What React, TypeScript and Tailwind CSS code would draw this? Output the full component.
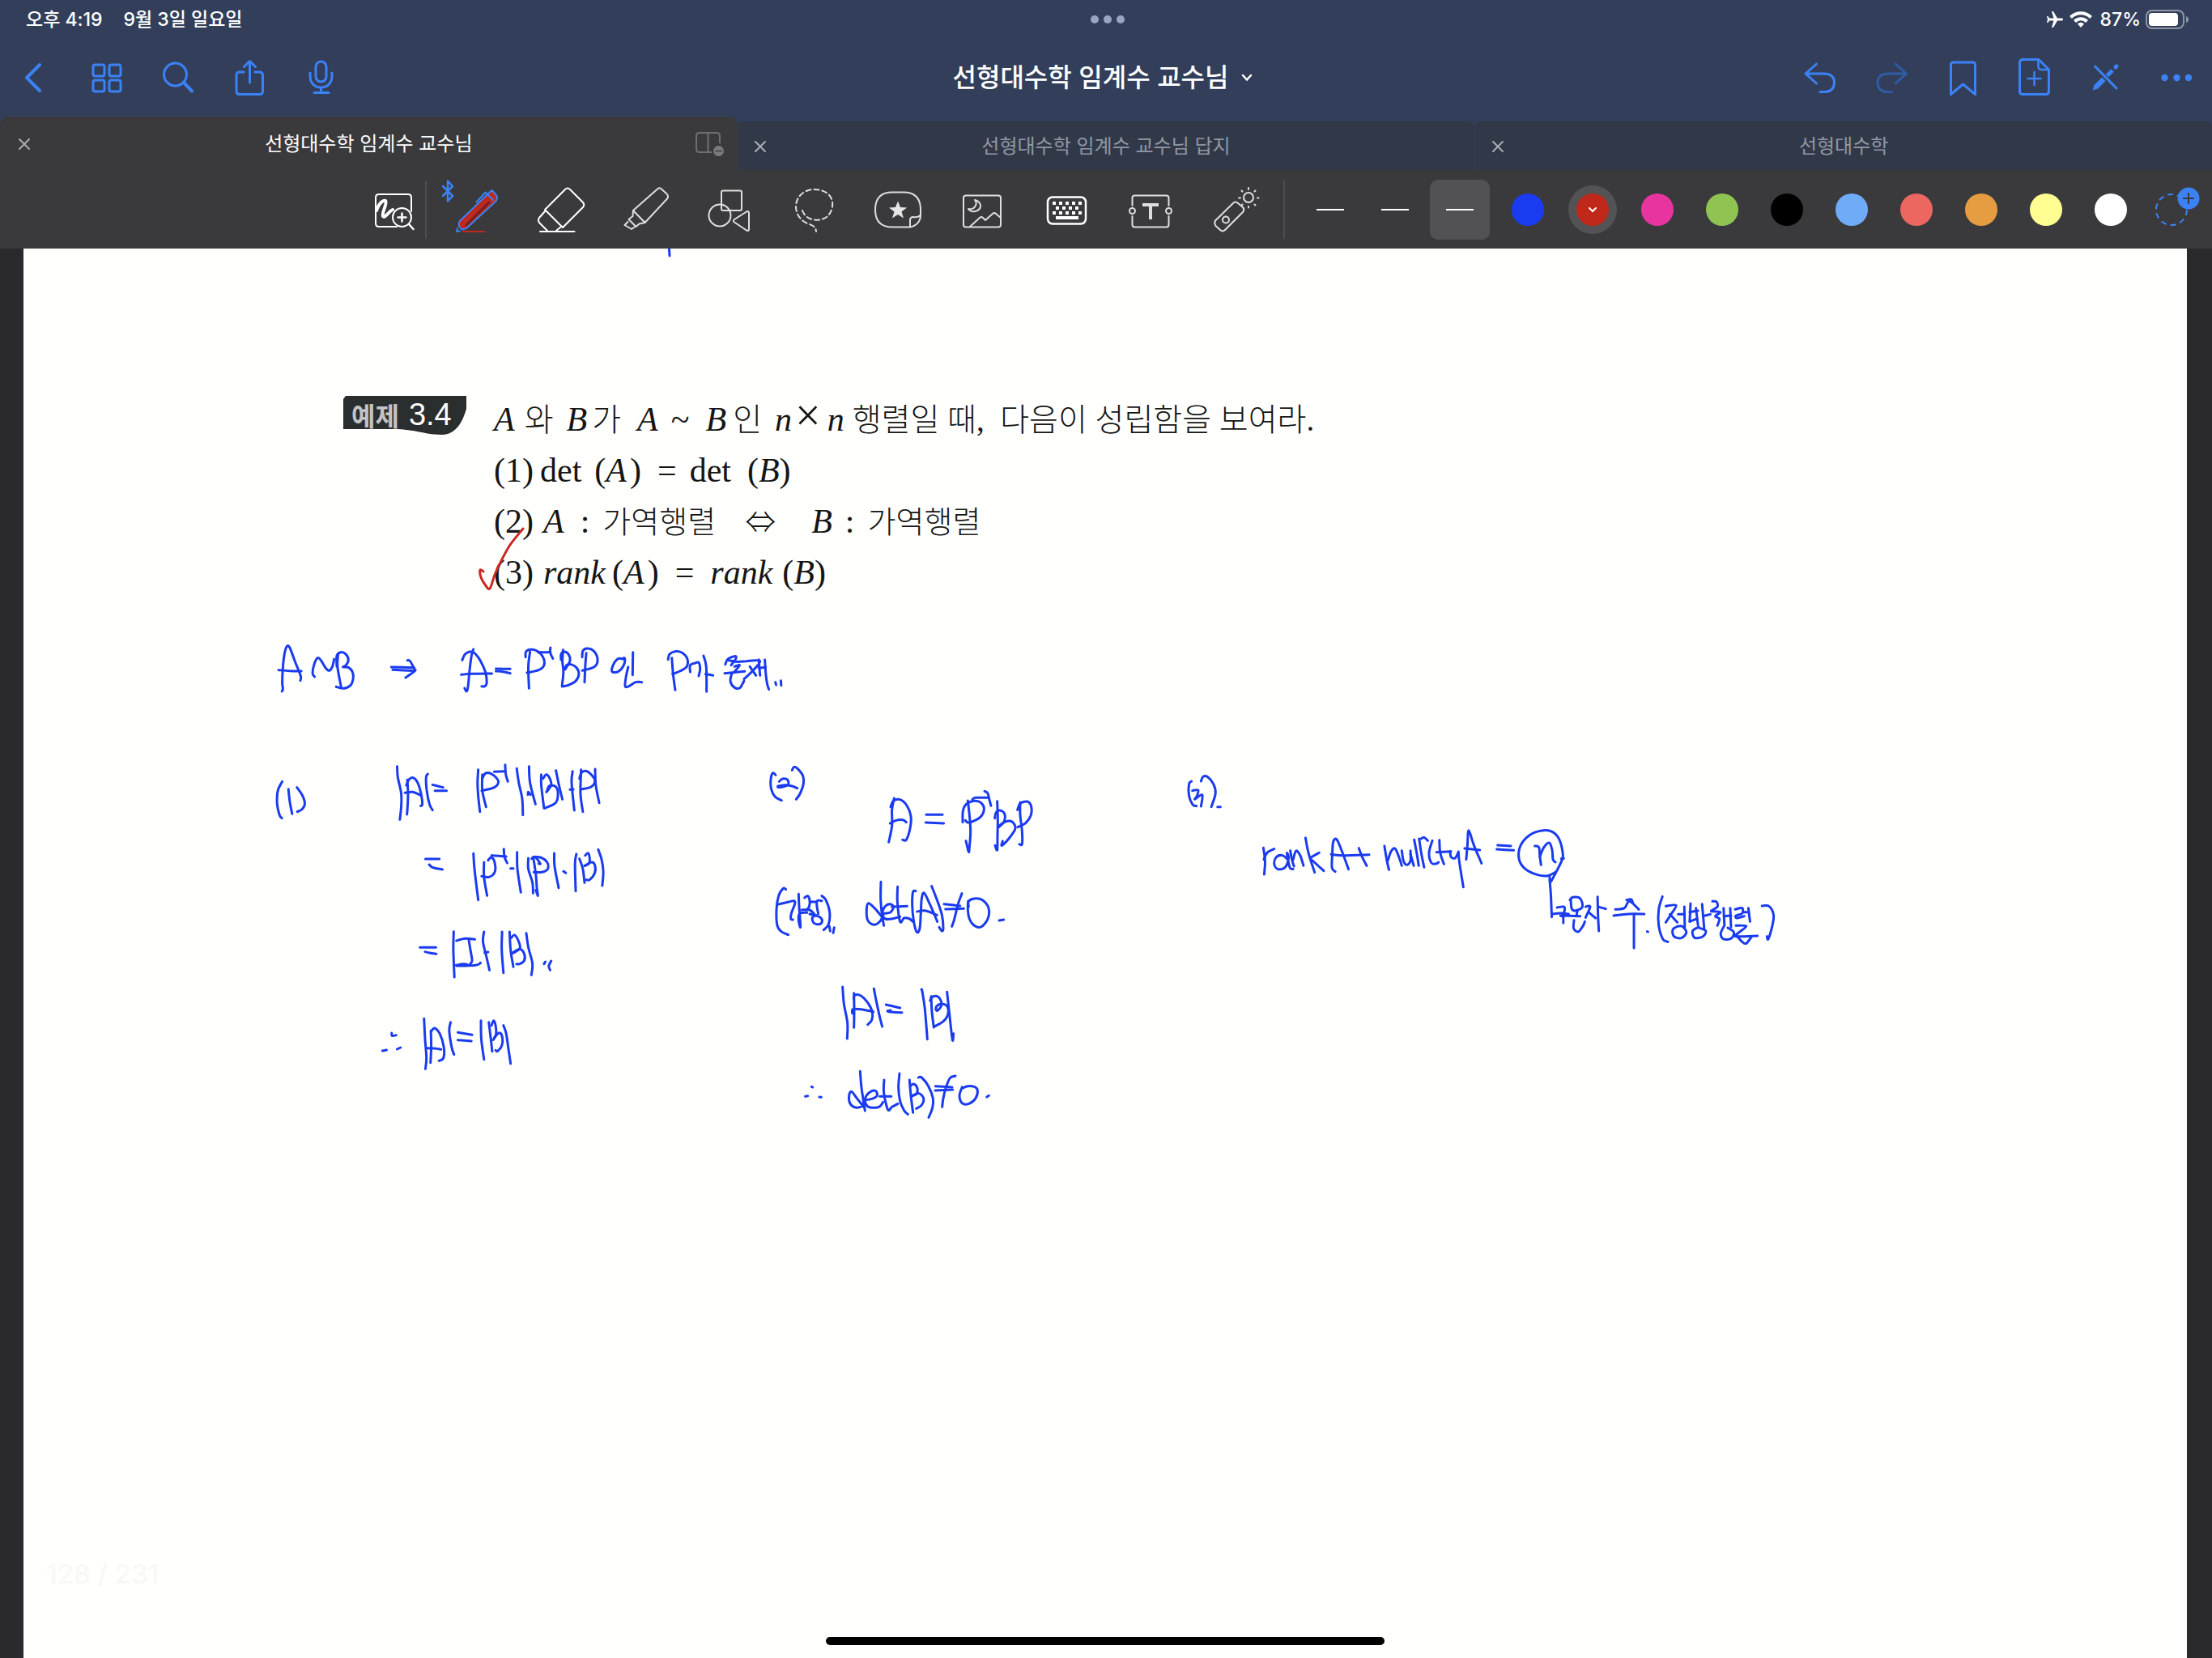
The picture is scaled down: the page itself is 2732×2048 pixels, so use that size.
import type { ReactNode } from "react";
import { MdAirplanemodeActive } from "react-icons/md";

const UI = 'font-[Inter,"Noto_Sans_CJK_KR",sans-serif]';

type IconProps = { children: ReactNode; stroke?: string; width?: number };

/* 48px icon of the navigation bar */
function NavIcon({ children, stroke = "#3b82f7", width = 3 }: IconProps) {
  return (
    <svg
      aria-hidden="true"
      viewBox="0 0 48 48"
      className="size-12 overflow-visible"
      fill="none"
      stroke={stroke}
      strokeWidth={width}
      strokeLinecap="round"
      strokeLinejoin="round"
    >
      {children}
    </svg>
  );
}

/* 64px icon of the drawing toolbar */
function ToolIcon({ children, stroke = "#dedede", width = 2 }: IconProps) {
  return (
    <svg
      aria-hidden="true"
      viewBox="0 0 64 64"
      className="size-16 overflow-visible"
      fill="none"
      stroke={stroke}
      strokeWidth={width}
      strokeLinecap="round"
      strokeLinejoin="round"
    >
      {children}
    </svg>
  );
}

function NavButton({ label, children }: { label: string; children: ReactNode }) {
  return (
    <button type="button" aria-label={label} className="flex h-24 w-[88px] items-center justify-center">
      {children}
    </button>
  );
}

function ToolButton({ label, children }: { label: string; children: ReactNode }) {
  return (
    <button type="button" aria-label={label} className="flex h-20 w-[104px] items-center justify-center">
      {children}
    </button>
  );
}

function StatusBar() {
  return (
    <div className="grid h-12 grid-cols-3 items-center pr-7 pl-8 text-[23px] font-medium text-white">
      <div className="flex gap-[26px]">
        <span>오후 4:19</span>
        <span>9월 3일 일요일</span>
      </div>
      <div className="flex justify-center gap-[6px]">
        <span className="size-[10px] rounded-full bg-[#99a5c3]" />
        <span className="size-[10px] rounded-full bg-[#99a5c3]" />
        <span className="size-[10px] rounded-full bg-[#99a5c3]" />
      </div>
      <div className="flex items-center justify-end gap-[6px]">
        <MdAirplanemodeActive className="size-6 rotate-90" aria-label="비행기 모드" />
        <svg viewBox="0 0 28 20" className="mr-1 h-5 w-7" fill="none" stroke="#fff" strokeWidth="4" aria-label="Wi-Fi">
          <path d="M1.5 7.5 A17.5 17.5 0 0 1 26.5 7.5" />
          <path d="M6.5 12.5 A10.5 10.5 0 0 1 21.5 12.5" />
          <path d="M14 20 L10 15.5 A5.5 5.5 0 0 1 18 15.5 Z" fill="#fff" stroke="none" />
        </svg>
        <span>87%</span>
        <svg viewBox="0 0 54 24" className="h-6 w-[54px]" aria-label="배터리">
          <rect x="1" y="1" width="46" height="22" rx="7" fill="none" stroke="#8e96a6" strokeWidth="2" />
          <rect x="4" y="4" width="36" height="16" rx="4" fill="#fff" />
          <path d="M50 8 Q53 9 53 12 Q53 15 50 16 Z" fill="#8e96a6" />
        </svg>
      </div>
    </div>
  );
}

function NavBar() {
  return (
    <nav className="flex h-24 items-center">
      <div className="flex flex-1">
        <NavButton label="뒤로">
          <NavIcon width={4}>
            <path d="M29 8 L13 24 L29 40" />
          </NavIcon>
        </NavButton>
        <NavButton label="페이지 보기">
          <NavIcon>
            <rect x="7" y="8" width="14" height="14" rx="2.5" />
            <rect x="27" y="8" width="14" height="14" rx="2.5" />
            <rect x="7" y="27" width="14" height="14" rx="2.5" />
            <rect x="27" y="27" width="14" height="14" rx="2.5" />
          </NavIcon>
        </NavButton>
        <NavButton label="검색">
          <NavIcon>
            <circle cx="20.5" cy="20" r="14" />
            <path d="M31 30 L41 40.5" strokeWidth="4" />
          </NavIcon>
        </NavButton>
        <NavButton label="공유">
          <NavIcon>
            <path d="M17 17 H12 Q8 17 8 21 V40.500 Q8 44.500 12 44.500 H36.500 Q40.500 44.500 40.500 40.500 V21 Q40.500 17 36.500 17 H31" />
            <path d="M24.500 30 V4 M17.500 10.500 L24.500 3.500 L31.500 10.500" />
          </NavIcon>
        </NavButton>
        <NavButton label="녹음">
          <NavIcon>
            <rect x="18" y="4" width="13" height="25" rx="6.500" />
            <path d="M11 18 V22 C11 31 17 36 24.500 36 C32 36 38 31 38 22 V18 M24.500 36 V42 M16 42.500 H34" />
          </NavIcon>
        </NavButton>
      </div>
      <button type="button" className="flex items-center gap-4 pr-2 text-[32px] font-medium text-white">
        <span>선형대수학 임계수 교수님</span>
        <svg viewBox="0 0 14 10" className="h-[10px] w-[14px]" fill="none" stroke="#fff" strokeWidth="2.500" strokeLinecap="round" aria-hidden="true">
          <path d="M2 2 L7 7.500 L12 2" />
        </svg>
      </button>
      <div className="flex flex-1 justify-end">
        <NavButton label="실행 취소">
          <NavIcon>
            <path d="M19.500 7 L6 19 L19.500 31 M6 19 H28 C37 19 41.500 23 41.500 30 C41.500 37 37 41.500 30 41.500 H24" />
          </NavIcon>
        </NavButton>
        <NavButton label="다시 실행">
          <NavIcon stroke="#2e5ca5">
            <path d="M29 7 L42.500 19 L29 31 M42.500 19 H20.500 C11.500 19 7 23 7 30 C7 37 11.500 41.500 18.500 41.500 H24.500" />
          </NavIcon>
        </NavButton>
        <NavButton label="책갈피">
          <NavIcon>
            <path d="M9.500 44.500 V8 Q9.500 5 12.500 5 H36.500 Q39.500 5 39.500 8 V44.500 L24.500 32 Z" />
          </NavIcon>
        </NavButton>
        <NavButton label="페이지 추가">
          <NavIcon>
            <path d="M30 1.500 H10.500 Q6.500 1.500 6.500 5.500 V40.500 Q6.500 44.500 10.500 44.500 H38.500 Q42.500 44.500 42.500 40.500 V14 Z" />
            <path d="M29.500 2 V10 Q29.500 14 33.500 14 H42 M24.500 17 V33 M16.500 25 H32.500" strokeWidth="2.500" />
          </NavIcon>
        </NavButton>
        <NavButton label="읽기 모드">
          <NavIcon>
            <path d="M11.500 10 L38 37" />
            <path d="M8.500 39.500 L10.500 33 L20 23.500 L24.500 28 L15 37.500 Z" fill="#3b82f7" stroke="none" />
            <path d="M26.500 21.500 L33 15" strokeWidth="5" strokeLinecap="butt" />
            <path d="M37 11 L38 10" strokeWidth="5" />
          </NavIcon>
        </NavButton>
        <NavButton label="더 보기">
          <svg viewBox="0 0 48 48" className="size-12" fill="#3b82f7" aria-hidden="true">
            <circle cx="9.500" cy="24" r="4.200" />
            <circle cx="24.500" cy="24" r="4.200" />
            <circle cx="39" cy="24" r="4.200" />
          </svg>
        </NavButton>
      </div>
    </nav>
  );
}

function CloseIcon() {
  return (
    <svg viewBox="0 0 16 16" className="size-4" fill="none" stroke="#a9adb6" strokeWidth="2" strokeLinecap="round" aria-hidden="true">
      <path d="M2 2 L14 14 M14 2 L2 14" />
    </svg>
  );
}

function Tabs() {
  return (
    <div className="grid h-[66px] grid-cols-3 items-end text-2xl">
      <div className="flex h-[66px] items-center rounded-t-[10px] bg-[#3a3a3c] px-4 pt-[2px] text-white">
        <button type="button" aria-label="탭 닫기" className="flex w-9 pl-[6px]">
          <CloseIcon />
        </button>
        <button type="button" className="flex-1 text-center">
          선형대수학 임계수 교수님
        </button>
        <button type="button" aria-label="분할 보기" className="w-9">
          <svg viewBox="0 0 36 30" className="h-[30px] w-9" fill="none" stroke="#6f6f72" strokeWidth="2" aria-hidden="true">
            <path d="M20 25 H5 Q1 25 1 21 V5 Q1 1 5 1 H26 Q30 1 30 5 V14 M15.500 1 V25" />
            <circle cx="28.500" cy="23.500" r="6.500" fill="#7b7b7e" stroke="none" />
            <path d="M24.500 23.500 h2 m1 0 h2 m1 0 h2" stroke="#3a3a3c" />
          </svg>
        </button>
      </div>
      <div className="flex h-15 items-center rounded-t-[6px] bg-[#313949] px-[14px] pt-[2px] text-[#9197a3]">
        <button type="button" aria-label="탭 닫기" className="flex w-9 pl-[6px]">
          <CloseIcon />
        </button>
        <button type="button" className="flex-1 pr-9 text-center">
          선형대수학 임계수 교수님 답지
        </button>
      </div>
      <div className="ml-px flex h-15 items-center rounded-t-[6px] bg-[#313949] px-[14px] pt-[2px] text-[#9197a3]">
        <button type="button" aria-label="탭 닫기" className="flex w-9 pl-[6px]">
          <CloseIcon />
        </button>
        <button type="button" className="flex-1 pr-9 text-center">
          선형대수학
        </button>
      </div>
    </div>
  );
}

const SWATCHES = [
  { name: "파랑", color: "bg-[#1a3bf0]" },
  { name: "빨강", color: "bg-[#c0281b]", selected: true },
  { name: "분홍", color: "bg-[#e8349f]" },
  { name: "초록", color: "bg-[#90c452]" },
  { name: "검정", color: "bg-black" },
  { name: "하늘", color: "bg-[#70abf7]" },
  { name: "산호", color: "bg-[#ec6760]" },
  { name: "주황", color: "bg-[#e69d42]" },
  { name: "노랑", color: "bg-[#fffe90]" },
  { name: "하양", color: "bg-white" },
];

const KEYS = [
  { y: 22, xs: [15, 23, 31, 39, 47] },
  { y: 28, xs: [19, 27, 35, 43] },
  { y: 34, xs: [15, 23, 31, 39, 47] },
];

function Toolbar() {
  return (
    <div className="flex h-[97px] items-center justify-end bg-[#3a3a3c] pr-[15px]">
      <button type="button" aria-label="확대 필기" className="flex h-20 w-[76px] items-center justify-center">
        <ToolIcon stroke="#ffffff">
          <path d="M53 34 V17 Q53 13 49 13 H13 Q9 13 9 17 V49 Q9 53 13 53 H35" />
          <path d="M10 33 C13 24 18 20 21 21 C24 24 16 36 18 40 C21 43 25 34 30 32" strokeWidth="4" />
          <circle cx="41.500" cy="41.500" r="11.500" />
          <path d="M50 50 L55.500 56 M41.500 36.500 V46.500 M36.500 41.500 H46.500" strokeWidth="2.500" />
        </ToolIcon>
      </button>
      <div className="mr-[10px] h-[72px] w-[2px] bg-[#4d4d4f]" />
      <ToolButton label="펜">
        <ToolIcon stroke="#3b82f7">
          <path d="M-10 3 L2 15 L-4 21.500 V-3.500 L2 3 L-10 15" strokeWidth="2.500" />
          <path d="M45 13 L50.500 8 L56 14 Q58.500 18 55 22 L19 55 Q14 58 11 54 Q8.500 50 11 46 Z" fill="#c0281b" />
          <path d="M19 51 L47 23" stroke="#6e2322" strokeWidth="3" />
          <path d="M45 13 L52 20 M31.500 22.500 L42.500 10.500 L45 13 M8 55 L7 59 L11 58.500" />
          <path d="M15 59 H41" stroke="#c0281b" />
        </ToolIcon>
      </ToolButton>
      <ToolButton label="지우개">
        <ToolIcon stroke="#ffffff">
          <path d="M12 32 L37 7 Q40 4 43 7 L59 23 Q61.500 26 59 29 L34 54 Z M12 34 L5 42 Q3 45 5 48 L15 58 M26 58 L32 53" />
          <path d="M6 59 H48.500" />
        </ToolIcon>
      </ToolButton>
      <ToolButton label="형광펜">
        <ToolIcon>
          <path d="M17 33 L47 6.500 Q50 4 52 6.500 L59 13 Q61 16 59 18.500 L31.500 48 Z" />
          <path d="M17 33 L16.500 40 L11.500 44 L20.500 53 L24.500 49.500 L31.500 48 M10.500 47 L6.500 51 L15 56 L18.500 53.500" />
        </ToolIcon>
      </ToolButton>
      <ToolButton label="도형">
        <ToolIcon>
          <rect x="22" y="8.500" width="25" height="24.500" rx="2" />
          <circle cx="20" cy="39" r="13.500" />
          <path d="M38 44 L53 34.500 Q56 33 56 36 V56 Q56 59 53 57.500 L38 47.500 Q35.500 45.500 38 44 Z" />
        </ToolIcon>
      </ToolButton>
      <ToolButton label="올가미">
        <ToolIcon>
          <path d="M18 33 C23 49 52 50 55 28 C57 14 45 7 33 7 C18 7 10 18 10 28 C10 38 16 45 24 49 C30 51 35 53 35 59" strokeDasharray="6 4" />
        </ToolIcon>
      </ToolButton>
      <ToolButton label="스티커">
        <ToolIcon>
          <path d="M47 53.500 H25 C10 53.500 4 45 4 32 C4 19 10 10.500 25 10.500 H39 C54 10.500 60 19 60 32 V39 C60 46 55 52 47 53.500 V45 Q47 41 51 41 Q58 42 60 38" />
          <path d="M32 21.500 L35 29 L43 29.500 L36.500 34.500 L39 42.500 L32 38 L25 42.500 L27.500 34.500 L21 29.500 L29 29 Z" fill="#e6e6e6" stroke="none" />
        </ToolIcon>
      </ToolButton>
      <ToolButton label="이미지">
        <ToolIcon>
          <rect x="9" y="14.500" width="46" height="39" rx="3" />
          <path d="M23 20 C27 24 23 33 15 31 C19 37 29 34 30 28 C30 23 27 21 23 20 Z M17 53 L29 42 Q31 40 33 42 L36 45 L45 37 Q47 35 49 37 L55 42" />
        </ToolIcon>
      </ToolButton>
      <ToolButton label="키보드">
        <ToolIcon stroke="#ffffff">
          <rect x="9" y="16.500" width="47" height="33" rx="6" strokeWidth="2.500" />
          {KEYS.map((row) =>
            row.xs.map((x) => <rect key={`${row.y}-${x}`} x={x} y={row.y} width="4" height="4" fill="#fff" stroke="none" />)
          )}
          <rect x="19" y="40" width="28" height="4" fill="#fff" stroke="none" />
        </ToolIcon>
      </ToolButton>
      <ToolButton label="텍스트">
        <ToolIcon>
          <path d="M9.500 27 V17.500 Q9.500 14.500 12.500 14.500 H51.500 Q54.500 14.500 54.500 17.500 V27 M9.500 40 V50.500 Q9.500 53.500 12.500 53.500 H51.500 Q54.500 53.500 54.500 50.500 V40" />
          <circle cx="9.500" cy="33.500" r="3.500" />
          <circle cx="54.500" cy="33.500" r="3.500" />
          <path d="M22 26 H42 M32 26 V44" strokeWidth="4" strokeLinecap="butt" />
        </ToolIcon>
      </ToolButton>
      <ToolButton label="레이저 포인터">
        <ToolIcon>
          <path d="M30 24 Q33 21 36 24 L42 29 Q44.500 32 42 35 L20 57 Q17 60 14 57 L8.500 52 Q6 48 8.500 45 Z" />
          <circle cx="21" cy="44.500" r="4" />
          <circle cx="49" cy="17" r="6" />
          <path d="M49 5 V7 M49 28 V29.500 M37 17.500 H39 M60 17.500 H61.500 M40.500 8.500 L41.500 9.500 M57.500 8.500 L56.500 9.500 M57.500 26.500 L56.500 25.500 M40.500 26.500 L41.500 25.500" />
        </ToolIcon>
      </ToolButton>
      <div className="mr-4 ml-2 h-[72px] w-[2px] bg-[#4d4d4f]" />
      <div className="mr-1 flex">
        {["얇은 선", "중간 선"].map((name) => (
          <button key={name} type="button" aria-label={name} className="flex h-[74px] w-20 items-center justify-center">
            <span className="h-[2px] w-[34px] bg-white" />
          </button>
        ))}
        <button type="button" aria-label="굵은 선" className="mx-[3px] flex h-[74px] w-[74px] items-center justify-center rounded-[10px] bg-[#525254]">
          <span className="h-[2px] w-[34px] bg-white" />
        </button>
      </div>
      {SWATCHES.map((s) => (
        <button key={s.name} type="button" aria-label={s.name} className="flex h-20 w-20 items-center justify-center">
          {s.selected ? (
            <span className="flex size-15 items-center justify-center rounded-full bg-[#535355]">
              <span className="flex size-10 items-center justify-center rounded-full bg-[#c0281b]">
                <svg viewBox="0 0 12 8" className="h-2 w-3" fill="none" stroke="#fff" strokeWidth="2" strokeLinecap="round" aria-hidden="true">
                  <path d="M2 2 L6 6 L10 2" />
                </svg>
              </span>
            </span>
          ) : (
            <span className={`size-10 rounded-full ${s.color}`} />
          )}
        </button>
      ))}
      <button type="button" aria-label="색상 추가" className="flex h-20 w-[70px] items-center justify-center">
        <svg viewBox="0 0 40 40" className="size-10 overflow-visible" fill="none" aria-hidden="true">
          <circle cx="20" cy="20" r="19" stroke="#3b82f7" strokeWidth="2" strokeDasharray="7 5" />
          <circle cx="41" cy="6" r="13.500" fill="#3b82f7" />
          <path d="M41 -1 V13 M34 6 H48" stroke="#3a3a3c" strokeWidth="2" />
        </svg>
      </button>
    </div>
  );
}

/* Turns a list of sampled pen positions into a smooth curve. */
function smooth(points: string) {
  const p = points.split(" ").map((s) => s.split(",").map(Number));
  let d = `M${p[0][0]} ${p[0][1]}`;
  for (let i = 0; i < p.length - 1; i++) {
    const a = p[i - 1] ?? p[i];
    const b = p[i];
    const c = p[i + 1];
    const e = p[i + 2] ?? c;
    d += `C${b[0] + (c[0] - a[0]) / 6} ${b[1] + (c[1] - a[1]) / 6} ${c[0] - (e[0] - b[0]) / 6} ${c[1] - (e[1] - b[1]) / 6} ${c[0]} ${c[1]}`;
  }
  return d;
}

type Ink = { label: string; at: string; strokes: string };

/* Freehand pen input: strokes are separated by "/", sampled positions by a space. */
const INK: Ink[] = [
  {
    label: "A ~ B → A = P⁻¹BP 인 P가 존재. (1) |A| = |P⁻¹|·|B|·|P|",
    at: "translate(320 780) scale(0.42092 0.33333)",
    strokes:
      "67,222 70,212 68,190 70,130 75,80 82,55 90,60 105,110 122,165 121,182/57,143 90,146 124,147/163,168 157,155 162,120 172,98 182,108 195,135 206,145 215,130 220,103/232,84 230,130 241,208/228,130 228,90 240,77 255,85 262,105 255,125 246,132 262,133 274,150 276,175 268,200 248,211 226,205/388,132 455,134/392,142 456,146/435,107 443,110 455,138 457,146 430,171/596,106 604,85 618,75 632,80 650,110 664,150 668,190 662,203 653,203/629,66 624,85 618,140 613,205 609,222 603,210/593,160 625,157 683,156/695,138 737,139/695,147 715,149 737,155/782,95 783,75 797,67 815,72 833,95 836,125 820,143 786,153/795,76 790,130 792,211/818,76 838,77 855,76/855,60 854,78 862,100/892,68 890,110 893,150 889,200/886,105 886,85 895,75 908,85 912,110 898,140/898,140 902,125 915,122 932,135 938,160 928,185 905,200 889,204/960,80 957,130 955,188/948,95 950,72 962,63 980,70 993,100 985,130 948,145/1068,102 1052,102 1037,130 1037,150 1055,148 1070,125 1073,100 1066,101/1097,77 1096,161/1083,132 1077,165 1074,203 1085,203 1105,188 1123,188/1211,98 1215,160 1221,217/1200,104 1204,85 1220,74 1240,78 1256,100 1255,130 1235,147 1213,158/1265,150 1265,125 1280,117 1290,115 1294,140 1290,165/1304,90 1312,130 1313,223/1310,158 1320,160 1332,163/1368,122 1375,103 1395,92 1400,95 1397,105 1385,125/1378,107 1400,112 1425,111/1366,155 1425,148/1395,130 1410,125 1393,152/1387,155 1383,185 1395,208 1410,210 1418,195 1423,183/1430,110 1470,110 1445,150 1423,176/1440,130 1458,163/1466,104 1470,163/1466,135 1486,133/1484,105 1487,160 1491,195 1496,215/1515,188 1517,198/1531,182 1532,200/68,556 55,590 53,640 60,680 67,692/86,584 90,630 97,676/111,578 128,610 134,640 125,660 112,668/405,500 407,540 417,600 417,650 413,697/435,550 437,600 436,640 434,678/432,570 440,548 452,542 465,560 475,600 479,640 474,646/428,598 450,595 474,607/495,528 490,540 492,590 500,640 509,662/509,568 540,578/516,590 550,590/643,512 641,560 643,610 648,668/655,530 655,590 666,650/655,545 665,525 685,530 702,555 690,578 653,590/690,520 722,518/722,494 724,530 730,556/756,508 762,560 772,620 774,680/789,605 790,595 797,605/792,500 795,560 811,640/828,530 828,570 836,655/833,545 843,530 853,545 857,570 843,595/845,590 852,572 870,575 877,600 870,635 838,655/871,515 880,570 890,622/912,586 922,585/920,518 917,560 925,663/945,512 943,600 950,668/940,545 947,522 965,520 985,550 975,575 945,585/986,510 988,570 998,635",
  },
  {
    label: "= |P⁻¹|·|P|·|B| = |I|·|B| ∴ |A| = |B|",
    at: "translate(320 1040) scale(0.42092 0.33333)",
    strokes:
      "488,63 529,63/499,84 510,95 538,102/629,43 632,100 643,215/660,75 660,130 669,199/672,68 680,58 690,70 692,110 675,130 653,127/682,50 725,54/718,26 720,55 728,78/738,98 746,98/757,38 758,100 768,187/790,60 790,100 802,150 804,190/805,60 812,120 815,170 818,199 812,178/800,62 810,55 825,80 820,80/803,57 825,57 845,75 847,100 830,112 806,112/866,42 867,90 879,170/893,109 900,115/931,45 927,80 929,182/940,62 950,100 955,151/957,50 965,41 970,60 968,80 955,88/957,88 975,75 985,85 985,115 970,140 960,140/995,28 1005,65 1010,110 1007,162/472,391 519,391/487,407 500,411 520,415/571,332 570,400 573,501/579,366 605,358 633,361/615,361 620,400 625,440 618,454/578,457 598,452 610,455 580,459 635,457 650,448/660,333 657,370 668,430 676,475/662,410 672,408/713,333 712,400 717,485/735,333 738,400 746,463/740,355 750,345 762,370 765,395 745,412/745,410 765,397 778,415 778,440 765,452 755,452/784,338 790,390 802,450 799,493/836,452 840,444/857,441 850,460 854,475/389,708 390,718 402,716/362,774 374,771/405,768 415,762/484,655 487,730 491,800 488,841/504,700 505,760 503,818/506,700 515,690 530,710 542,760 541,800 528,811/490,764 515,765 534,769/562,668 558,700 565,760 572,788/583,706 625,715/583,734 623,738/651,662 652,730 660,806/674,668 680,730 684,776/682,680 688,662 694,680 695,715 687,733/690,725 705,707 714,725 712,755 700,775 694,772/717,680 725,710 732,770 738,821",
  },
  {
    label: "(2) A = P⁻¹BP (가정) det(A) ≠ 0.",
    at: "translate(920 920) scale(0.33333)",
    strokes:
      "114,112 105,104 97,120 96,155 110,190 136,206/127,136 140,126 158,130 160,148 135,157 122,157/122,153 150,149 175,153 194,161/175,94 182,82 195,88 215,115 217,145 205,180 190,202/553,198 545,240 545,300 533,361/540,230 550,208 575,203 600,225 615,265 612,310 598,352 584,352/538,291 560,280 585,278 598,287/672,259 732,259/670,288 737,291/826,207 832,260 836,320 832,380 829,397 819,356/807,287 808,245 820,220 850,208 875,215 886,240 870,270 830,288 817,280/843,202 855,196 900,196/888,172 900,180 905,200 912,226/935,209 937,280 936,340 935,390 927,373/926,272 930,252 945,243 962,255 960,285 940,305/940,302 965,285 990,285 1002,310 980,345 952,373 955,357/1020,213 1020,260 1027,320 1027,368 1017,368/1010,241 1020,218 1045,210 1060,225 1060,260 1040,290 1011,305/152,536 142,532 125,560 117,610 120,670 135,692 161,704/124,591 160,583 182,578 185,590 172,625 170,645 178,648/199,553 201,600 206,675 199,650 203,625 230,622/221,567 232,560 240,575 238,600 228,612/210,612 240,612 258,628/245,582 265,582/285,578 268,578 267,600 272,626/265,632 250,640 255,660 275,665 286,655 280,640 260,632 240,627/285,560 300,575 314,620 310,665 292,686/313,673 316,690/331,677 327,697/510,640 480,605 458,587 451,610 455,650 478,667 500,655 513,630/504,508 503,570 508,630 515,670/513,625 540,620 550,600 535,590 515,605 510,630 520,645 545,645 575,637/566,526 565,580 575,655 590,642 610,645 622,655/545,600 601,598/633,542 623,545 620,590 625,650 637,694 648,680 652,620 655,570 664,549 685,590 713,655/638,618 670,615 712,631/692,524 710,570 730,630 735,680 730,690 720,676/738,590 797,597/743,609 811,607/804,551 790,590 775,650 767,673/829,600 829,580 850,570 880,575 903,605 900,645 875,675 850,670 832,645 826,610 827,580/942,651 959,648",
  },
  {
    label: "|A| = |B| ∴ det(B) ≠ 0.",
    at: "translate(920 1160) scale(0.33333)",
    strokes:
      "362,177 367,240 380,310 379,369/404,200 405,270 404,328/403,220 408,207 430,210 455,235 472,270 470,300 455,317/398,275 400,260 430,260 476,269/478,184 487,230 500,290 509,324/523,243 550,249 575,255/540,264 528,267 550,271 582,272/654,187 657,193 667,260 676,371/690,212 693,270 700,327/686,228 695,214 715,213 727,230 728,247 715,264 708,262 712,247 730,240 750,250 752,280 735,305 700,325/749,196 757,270 769,373 773,350/247,547 251,549/224,583 233,581/276,585 283,586/443,625 415,590 395,565 386,580 390,610 410,624 435,618 442,600/427,490 432,550 445,636/440,597 470,592 490,580 485,563 470,563 450,580 445,600 455,620 480,625 500,620 512,604/516,522 515,570 530,632 545,622 567,610/500,583 542,583/573,498 569,550 575,600 590,635 604,649/610,522 615,580 623,643/612,545 625,537 638,550 637,572 620,582/620,580 645,572 662,590 655,615 635,628/643,513 655,513 680,545 697,590 695,625 681,661/706,545 768,549/705,561 770,558/780,507 760,515 745,550 735,590 731,622/805,548 795,580 805,608 830,610 855,590 862,560 850,547 825,545 808,552/896,585 904,580",
  },
  {
    label: "(3). rank A + nullity A = n → 문자 수. (정방행렬)",
    at: "translate(1440 930) scale(0.5102 0.33333)",
    strokes:
      "62,105 56,115 56,160 65,192 74,197/64,140 78,138 75,160 70,172 88,155 85,198/85,105 90,88 100,88 115,115 120,150 110,200/125,200 132,200/236,352 240,400 238,450/237,395 245,370 262,356/295,395 282,380 268,385 262,410 270,430 288,425 297,390 293,372 300,425 308,430/301,362 305,395 310,420/308,395 315,363 325,380 333,418/338,315 345,370 360,443/371,370 350,390 357,402 382,437/410,440 402,425 403,370 405,330 413,320 425,360 442,431/400,376 430,380 492,377/467,353 475,385 486,418/529,345 535,400 540,433/537,400 545,365 555,355 565,390 571,418/571,362 575,400 583,415 592,400 592,362/592,375 600,418/601,322 607,370 612,418/613,318 618,370 625,424/618,318 625,313 634,325/645,325 637,370 643,408 655,410 660,405/662,323 664,370 673,412/655,368 690,365/688,365 690,385 700,390 708,368/708,366 710,400 715,450 720,497/727,395 730,340 733,287 745,340 764,409/723,354 760,360/803,342 835,345/801,357 842,361/945,440 925,455 900,452 870,430 855,395 858,345 880,305 910,288 935,292 952,320 961,375 958,400 940,455 931,478 929,460/957,392 963,391/893,345 903,350 905,380 908,415/905,385 915,350 928,333 935,360 937,395 943,405/929,470 932,530 934,608/935,597 955,594 975,597/947,573 963,570 965,585 958,605/955,603 1003,605/962,605 962,630/980,540 982,575 990,585 1008,572 1003,540 985,535 978,545/988,620 987,650 998,663 1010,640 1014,625/996,583 994,603/1016,570 1027,570 1016,610/1023,590 1040,612/1045,533 1046,600 1048,660/1046,570 1065,578/1115,545 1127,543 1130,556/1088,580 1110,575 1122,550 1145,580/1084,603 1120,597 1158,597/1133,600 1133,723/1165,662 1167,663/1202,532 1193,580 1193,640 1203,690 1215,700/1210,568 1235,565 1222,600 1210,628/1220,598 1238,628/1240,598 1255,598/1255,570 1256,645/1240,642 1227,655 1230,680 1248,686 1260,665 1250,643 1238,643/1270,558 1268,625/1268,590 1288,585/1283,575 1288,638/1268,625 1285,615/1298,560 1303,650/1300,605 1318,598/1290,645 1275,660 1280,685 1300,680 1307,660 1290,648/1323,550 1333,552 1335,570 1320,585/1320,587 1342,590 1330,605 1340,615 1335,640/1350,575 1352,640/1352,605 1368,603/1366,575 1368,645/1350,645 1343,670 1350,690 1368,688 1375,665 1360,648/1378,580 1395,575 1395,595 1380,603 1382,612 1400,605/1398,590 1410,590/1410,575 1414,625/1380,640 1405,642 1385,668 1380,680 1432,678/1382,678 1395,700 1405,706 1418,680/1443,567 1460,568 1471,600 1468,640 1458,690 1455,680",
  },
  { label: "", at: "translate(826 300)", strokes: "0,0 1,16" },
];

function InkLayer() {
  return (
    <svg
      viewBox="29 307 2672 1741"
      className="pointer-events-none absolute top-0 left-0 h-[1741px] w-[2672px] max-w-none"
      fill="none"
      strokeLinecap="round"
      strokeLinejoin="round"
    >
      {INK.map((group) => (
        <g key={group.at} role="img" aria-label={group.label} transform={group.at} stroke="#1a3bf0">
          {group.strokes.split("/").map((stroke) => (
            <path key={stroke} d={smooth(stroke)} strokeWidth="3" vectorEffect="non-scaling-stroke" />
          ))}
        </g>
      ))}
      <path
        d={smooth("597,706 593,704 594,713 599,722 605,727 611,710 619,693 630,673 646,653")}
        stroke="#c8281f"
        strokeWidth="3"
      />
    </svg>
  );
}

function Problem() {
  return (
    <section className="flex items-start pt-[179px] pl-[395px]">
      <div className="relative mt-[3px] h-12 w-[152px]">
        <svg viewBox="0 0 152 48" className="absolute inset-0 h-12 w-[152px]" aria-hidden="true">
          <path d="M3 0 H152 V16 C148 30 140 48 122 48 C100 48 90 41 60 41 H0 V4 Z" fill="#2b2e2e" />
        </svg>
        <h1 className="relative flex items-center gap-3 pl-[10px] leading-[46px] text-white">
          <span className='font-["Noto_Sans_CJK_KR",sans-serif] text-[32px] font-bold text-[#c4c4c4]'>예제</span>
          <span className='font-["Liberation_Sans",sans-serif] text-[38px]'>3.4</span>
        </h1>
      </div>
      <div className='ml-[34px] font-["Liberation_Serif","Noto_Sans_CJK_KR",serif] text-[42px] leading-[64px] font-light whitespace-nowrap text-[#151515]'>
        <p className="flex h-[63px] items-baseline">
          <i>A</i>
          <span className="ml-3 text-[39px]">와</span>
          <i className="ml-4">B</i>
          <span className="ml-[6px] text-[39px]">가</span>
          <i className="ml-5">A</i>
          <span className="ml-4">~</span>
          <i className="ml-5">B</i>
          <span className="ml-2 text-[39px]">인</span>
          <i className="ml-4">n</i>
          <span className="ml-1 text-[56px] leading-[54px]">×</span>
          <i className="ml-2">n</i>
          <span className="ml-[10px] text-[39px]">행렬일 때,&nbsp; 다음이 성립함을 보여라.</span>
        </p>
        <p className="flex h-[63px] items-baseline">
          <span>(1)</span>
          <span className="ml-2">det</span>
          <span className="ml-4">(</span>
          <i>A</i>
          <span className="ml-1">)</span>
          <span className="ml-5">=</span>
          <span className="ml-4">det</span>
          <span className="ml-5">(</span>
          <i>B</i>
          <span>)</span>
        </p>
        <p className="flex h-[63px] items-baseline">
          <span>(2)</span>
          <i className="ml-3">A</i>
          <span className="ml-5">:</span>
          <span className="ml-4 text-[38px]">가역행렬</span>
          <span className='ml-9 font-["Noto_Sans_CJK_KR",sans-serif] text-[38px] leading-[59px]'>⇔</span>
          <i className="ml-11">B</i>
          <span className="ml-4">:</span>
          <span className="ml-4 text-[38px]">가역행렬</span>
        </p>
        <p className="flex h-[63px] items-baseline">
          <span>(3)</span>
          <i className="ml-3">rank</i>
          <span className="ml-2">(</span>
          <i>A</i>
          <span className="ml-1">)</span>
          <span className="ml-5">=</span>
          <i className="ml-5">rank</i>
          <span className="ml-3">(</span>
          <i>B</i>
          <span>)</span>
        </p>
      </div>
    </section>
  );
}

export default function App() {
  return (
    <div className={`flex min-h-screen flex-col bg-[#2a2a2c] ${UI}`}>
      <header className="bg-[#333f5a]">
        <StatusBar />
        <NavBar />
        <Tabs />
        <Toolbar />
      </header>
      <div className="flex flex-1 pr-[31px] pl-[29px]">
        <main className="relative flex-1 overflow-hidden bg-[#fffffd]">
          <Problem />
          <InkLayer />
          <p className="absolute bottom-[82px] left-7 text-[33px] leading-[44px] font-medium text-[#f8f8f6]">128 / 231</p>
          <div className="absolute bottom-4 left-1/2 h-[10px] w-[690px] -translate-x-1/2 rounded-full bg-black" />
        </main>
      </div>
    </div>
  );
}
